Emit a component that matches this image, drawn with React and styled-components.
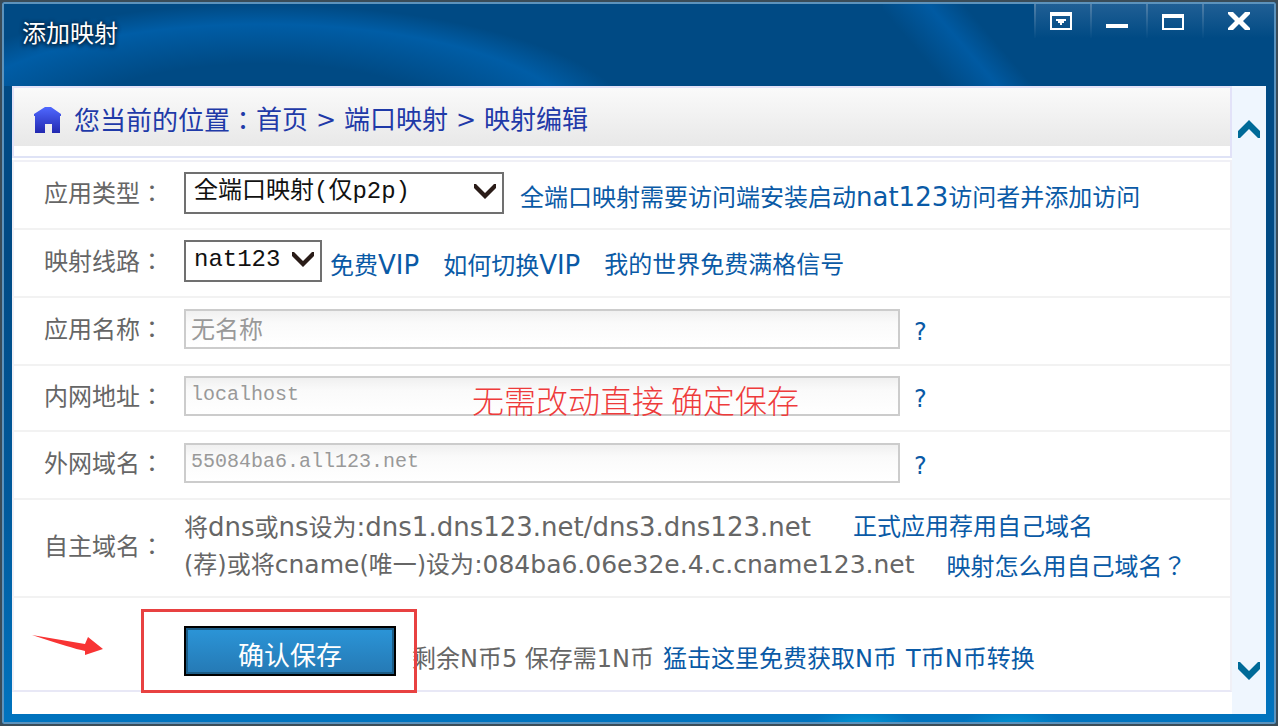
import React from 'react';
import styled, { createGlobalStyle } from 'styled-components';

const GlobalStyle = createGlobalStyle`
  * {
    box-sizing: border-box;
  }
  body {
    margin: 0;
    background: #3a4c58;
    color: #666;
    font-family: 'DejaVu Sans', 'Noto Sans CJK SC', sans-serif;
    font-size: 24px;
    line-height: 36px;
  }
`;

const Frame = styled.div`
  display: flex;
  flex-direction: column;
  min-height: 100vh;
  padding: 0 8px 8px;
  border: 2px solid #3a4c58;
  border-radius: 4px;
  box-shadow: inset 0 0 0 2px #5c93bd;
  background:
    radial-gradient(ellipse 325px 110px at 260px 130px, transparent 62%, #005da6 98%, transparent 116%) no-repeat 0 0 / 100% 84px,
    linear-gradient(to top right, transparent 36%, #005aa2 50%, transparent 60%) no-repeat 881px -50px / 180px 210px,
    radial-gradient(ellipse 50px 16px at 860px 100%, #0096d4, transparent) no-repeat,
    radial-gradient(ellipse 50px 16px at 1010px 100%, #0090d0, transparent) no-repeat,
    linear-gradient(#004a84, #004a84 35%, #005a9c 70%, #0074bf);
`;

const TitleBar = styled.header`
  display: flex;
  justify-content: space-between;
  height: 84px;
  padding-left: 12px;
`;

const Title = styled.h1`
  margin: 14px 0 0;
  font-size: 24px;
  font-weight: 400;
  color: #fff;
  text-shadow: 0 2px 4px #001a30, 0 0 4px #001a30;
`;

const WindowButtons = styled.div`
  display: flex;
  padding-top: 2px;
  margin-right: -6px;
`;

const WindowButton = styled.button`
  display: flex;
  justify-content: center;
  width: ${({ $wide }) => ($wide ? 72 : 56)}px;
  height: 34px;
  padding: 6px ${({ $wide }) => ($wide ? 0 : 4)}px 0 0;
  border: 0;
  border-left: 2px solid;
  border-image: linear-gradient(#5583ab, #004a84) 1;
  background: linear-gradient(#205f95, #004a84);
`;

const Panel = styled.div`
  flex: 1;
  display: flex;
  margin: 0 2px 2px;
  background: #fff;
`;

const Content = styled.main`
  flex: 1;
  min-width: 0;
`;

const Breadcrumb = styled.nav`
  display: flex;
  align-items: center;
  height: 72px;
  padding: 0 20px 4px;
  border: 2px solid #e2e2f8;
  border-bottom-color: #dfe3f6;
  background: linear-gradient(#fafafa, #e8e8e8 58px, #fff 58px);
  color: #1f3aa8;
  font-size: 26px;
`;

const Crumb = styled.a`
  color: inherit;
  text-decoration: none;
`;

const HomeIcon = styled.svg`
  margin-right: 12px;
`;

const Separator = styled.span`
  width: 36px;
  text-align: center;
  font-size: 24px;
`;

// full-width punctuation sits in the middle of its box here
const Wide = styled.span`
  font-family: 'Noto Sans CJK TC', sans-serif;
`;

const Form = styled.form`
  margin-top: 2px;
  border: 2px solid #f0f0f6;
  border-bottom-color: #e8e8f6;
`;

const Row = styled.div`
  display: grid;
  grid-template-columns: 140px 1fr;
  align-items: center;
  min-height: ${({ $height }) => $height || 68}px;
  padding: 0 0 4px 30px;

  & + & {
    border-top: 2px solid #f2f2f2;
  }
`;

const Field = styled.div`
  position: relative;
  display: flex;
  align-items: center;
`;

const SelectBox = styled.div`
  position: relative;
  width: ${({ $width }) => $width}px;
`;

const Select = styled.select`
  appearance: none;
  display: block;
  width: 100%;
  height: 42px;
  padding: 0 8px 4px;
  border: 2px solid #707070;
  border-radius: 0;
  background: #fff;
  color: #111;
  font-family: 'Liberation Mono', 'Noto Sans CJK SC', monospace;
  font-size: 24px;
`;

const SelectArrow = styled.svg`
  position: absolute;
  top: 12px;
  right: 7px;
  pointer-events: none;
`;

const Input = styled.input`
  width: 716px;
  height: 40px;
  padding: 0 5px 4px;
  border: 2px solid #ccc;
  background: linear-gradient(#f0f0f0, #fafafa 12px, #fff);
  color: #999;
  font-family: 'Liberation Mono', 'Noto Sans CJK SC', monospace;
  font-size: ${({ $size }) => $size || 20}px;
  outline: 0;
`;

const Links = styled.div`
  display: flex;
  gap: 24px;
  margin-top: 8px;
  padding-left: ${({ $indent }) => $indent}px;
`;

const Link = styled.a`
  color: #0a5aa6;
  text-decoration: none;
  white-space: nowrap;
`;

const Help = styled(Link)`
  margin-left: 14px;
  padding-top: 6px;
`;

const Latin = styled.span`
  font-size: ${({ $size }) => $size || 26}px;
`;

const Lines = styled.div`
  line-height: 38px;
  white-space: nowrap;
`;

const Line = styled.div`
  display: flex;
  gap: ${({ $gap }) => $gap}px;
  height: 38px;
`;

const Note = styled.span`
  position: absolute;
  left: 288px;
  top: 6px;
  color: #ee3b3b;
  font-family: 'Noto Sans CJK SC', sans-serif;
  font-size: 32px;
  font-weight: 300;
  pointer-events: none;
`;

const SubmitBox = styled.div`
  position: relative;
  margin-top: 18px;
`;

const Submit = styled.button`
  display: block;
  width: 212px;
  height: 50px;
  padding: 4px 0 0;
  border: 2px solid #000;
  box-shadow: inset 0 0 0 2px #1b5c86;
  background: linear-gradient(#2b95d8, #2579b4);
  color: #fff;
  font-family: 'Noto Sans CJK SC', sans-serif;
  font-size: 26px;
`;

const Highlight = styled.div`
  position: absolute;
  z-index: 1;
  inset: -17px -21px -17px -43px;
  border: 3px solid #e84141;
  pointer-events: none;
`;

const Pointer = styled.svg`
  position: absolute;
  left: -153px;
  top: 8px;
`;

const Balance = styled.div`
  display: flex;
  gap: 9px;
  margin: 34px 0 0 16px;
  white-space: nowrap;
`;

const Scrollbar = styled.div`
  display: flex;
  flex-direction: column;
  justify-content: space-between;
  width: 34px;
  padding: 34px 0;
  background: #eff6fe;
`;

const ScrollButton = styled.button`
  display: flex;
  justify-content: center;
  padding: 0;
  border: 0;
  background: none;
`;

const LabelText = ({ htmlFor, children }) => (
  <label htmlFor={htmlFor}>
    {children}
    <Wide>：</Wide>
  </label>
);

const Dropdown = ({ id, width, value }) => (
  <SelectBox $width={width}>
    <Select id={id} defaultValue={value}>
      <option>{value}</option>
    </Select>
    <SelectArrow width="24" height="16">
      <path d="M1 0 H3 L12 9 L21 0 H23 V4 L12 15 L1 4Z" fill="#2a1c18" />
    </SelectArrow>
  </SelectBox>
);

const textFields = [
  { id: 'name', label: '应用名称', value: '无名称', size: 24, height: 68 },
  { id: 'host', label: '内网地址', value: 'localhost', height: 66, note: '无需改动直接 确定保存' },
  { id: 'domain', label: '外网域名', value: '55084ba6.all123.net', height: 68 },
];

const App = () => (
  <>
    <GlobalStyle />
    <Frame>
      <TitleBar>
        <Title>添加映射</Title>
        <WindowButtons>
          <WindowButton aria-label="菜单">
            <svg width="22" height="20">
              <path d="M0 2H22V20H0Z M2 6V18H20V6Z" fill="#fff" fillRule="evenodd" />
              <path d="M6 9H16V11H14V13H12V15H10V13H8V11H6Z" fill="#fff" />
            </svg>
          </WindowButton>
          <WindowButton aria-label="最小化">
            <svg width="22" height="20">
              <path d="M0 14H22V18H0Z" fill="#fff" />
            </svg>
          </WindowButton>
          <WindowButton aria-label="最大化">
            <svg width="22" height="20">
              <path d="M0 4H22V20H0Z M2 8V18H20V8Z" fill="#fff" fillRule="evenodd" />
            </svg>
          </WindowButton>
          <WindowButton $wide aria-label="关闭">
            <svg width="22" height="20">
              <path d="M0 2H5L11 8L17 2H22V4L15 11L22 18V20H17L11 14L5 20H0V18L7 11L0 4Z" fill="#fff" />
            </svg>
          </WindowButton>
        </WindowButtons>
      </TitleBar>

      <Panel>
        <Content>
          <Breadcrumb>
            <HomeIcon width="28" height="28">
              <defs>
                <linearGradient id="home" x2="0" y2="1">
                  <stop offset="0" stopColor="#4f68ff" />
                  <stop offset="1" stopColor="#2228b0" />
                </linearGradient>
              </defs>
              <path d="M11 1H17L27 8V10H26V27H18V18H11V27H1V10H0V8Z" fill="url(#home)" />
            </HomeIcon>
            <span>您当前的位置<Wide>：</Wide></span>
            <Crumb href="#home">首页</Crumb>
            <Separator>&gt;</Separator>
            <Crumb href="#ports">端口映射</Crumb>
            <Separator>&gt;</Separator>
            <span>映射编辑</span>
          </Breadcrumb>

          <Form onSubmit={e => e.preventDefault()}>
            <Row $height={66}>
              <LabelText htmlFor="type">应用类型</LabelText>
              <Field>
                <Dropdown id="type" width={320} value="全端口映射(仅p2p)" />
                <Links $indent={16}>
                  <Link href="#visitor">全端口映射需要访问端安装启动<Latin>nat123</Latin>访问者并添加访问</Link>
                </Links>
              </Field>
            </Row>
            <Row>
              <LabelText htmlFor="line">映射线路</LabelText>
              <Field>
                <Dropdown id="line" width={138} value="nat123" />
                <Links $indent={8}>
                  <Link href="#vip">免费<Latin>VIP</Latin></Link>
                  <Link href="#switch">如何切换<Latin>VIP</Latin></Link>
                  <Link href="#minecraft">我的世界免费满格信号</Link>
                </Links>
              </Field>
            </Row>
            {textFields.map(({ id, label, value, size, height, note }) => (
              <Row key={id} $height={height}>
                <LabelText htmlFor={id}>{label}</LabelText>
                <Field>
                  <Input id={id} defaultValue={value} $size={size} />
                  {note && <Note>{note}</Note>}
                  <Help href="#help">?</Help>
                </Field>
              </Row>
            ))}
            <Row $height={98}>
              <span>自主域名<Wide>：</Wide></span>
              <Lines>
                <Line $gap={42}>
                  <span>将<Latin>dns</Latin>或<Latin>ns</Latin>设为<Latin>:dns1.dns123.net/dns3.dns123.net</Latin></span>
                  <Link href="#own">正式应用荐用自己域名</Link>
                </Line>
                <Line $gap={32}>
                  <span>(荐)或将<Latin $size={25}>cname</Latin>(唯一)设为<Latin $size={25}>:084ba6.06e32e.4.c.cname123.net</Latin></span>
                  <Link href="#how">映射怎么用自己域名<Wide>？</Wide></Link>
                </Line>
              </Lines>
            </Row>
            <Row $height={94}>
              <span />
              <Field>
                <SubmitBox>
                  <Submit type="submit">确认保存</Submit>
                  <Highlight />
                  <Pointer width="74" height="24">
                    <path d="M1 1 L54 10 L57 3 L72 15 L54 21 L54 17 Q40 14 1 1Z" fill="#f83434" />
                  </Pointer>
                </SubmitBox>
                <Balance>
                  <span>剩余N币5 保存需1N币</span>
                  <Link href="#earn">猛击这里免费获取N币</Link>
                  <Link href="#exchange">T币N币转换</Link>
                </Balance>
              </Field>
            </Row>
          </Form>
        </Content>
        <Scrollbar>
          <ScrollButton aria-label="向上滚动">
            <svg width="22" height="20">
              <path d="M11 0 L22 11 V18 H20 L11 9 L2 18 H0 V11Z" fill="#006a98" />
            </svg>
          </ScrollButton>
          <ScrollButton aria-label="向下滚动">
            <svg width="22" height="20">
              <path d="M11 20 L22 9 V2 H20 L11 11 L2 2 H0 V9Z" fill="#006a98" />
            </svg>
          </ScrollButton>
        </Scrollbar>
      </Panel>
    </Frame>
  </>
);

export default App;
